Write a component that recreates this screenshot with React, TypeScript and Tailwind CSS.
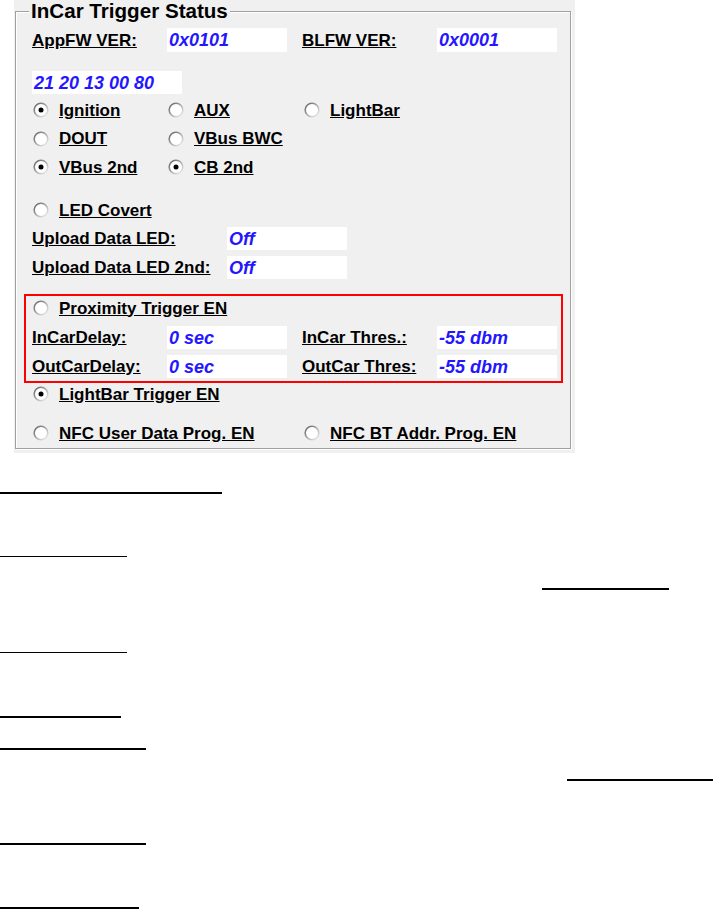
import React from "react";

const Radio = ({ checked }: { checked?: boolean }) => (
  <svg width="16" height="16" viewBox="0 0 16 16" className="shrink-0">
    <defs>
      <linearGradient id="radioRing" x1="0" y1="0" x2="1" y2="1">
        <stop offset="0" stopColor="#5e5e5e" />
        <stop offset="0.55" stopColor="#b0b0b0" />
        <stop offset="1" stopColor="#f6f6f6" />
      </linearGradient>
    </defs>
    <circle cx="8" cy="8" r="6.8" fill="#fff" stroke="url(#radioRing)" strokeWidth="1.6" />
    {checked && <circle cx="8" cy="8" r="2.5" fill="#000" />}
  </svg>
);

const Option = ({ label, checked, className }: { label: string; checked?: boolean; className?: string }) => (
  <div className={`flex items-center gap-[10px] ${className ?? ""}`}>
    <Radio checked={checked} />
    <span className="text-[17px] font-bold leading-none text-black underline">{label}</span>
  </div>
);

const Label = ({ text, className }: { text: string; className?: string }) => (
  <span className={`shrink-0 text-[17px] font-bold leading-none text-black underline ${className ?? ""}`}>{text}</span>
);

const Value = ({ text, className }: { text: string; className?: string }) => (
  <div className={`flex shrink-0 items-center bg-white pl-[2px] text-[18px] font-bold italic leading-none text-[#2416ff] ${className ?? ""}`}>
    {text}
  </div>
);

export default function App() {
  return (
    <div className="h-[910px] w-[713px] overflow-hidden bg-white font-['Liberation_Sans',Arial,sans-serif]">
      {/* dialog panel */}
      <div className="ml-[14px] h-[453px] w-[561px] bg-[#f0f0f0] pt-[11px]">
        {/* group box */}
        <div className="ml-[1px] w-[556px] border border-[#a0a0a0] pb-[1px] pl-[16px] shadow-[1px_1px_0_#fff,inset_1px_1px_0_#fff]">
          <div className="-mt-[12px] ml-[-3px] flex h-[22px] w-fit items-center bg-[#f0f0f0] px-[2px] text-[20.6px] font-bold leading-none text-black">
            InCar Trigger Status
          </div>

          <div className="mt-[6px] flex h-[24px] items-center">
            <Label text="AppFW VER:" className="w-[135px]" />
            <Value text="0x0101" className="h-[24px] w-[120px]" />
            <Label text="BLFW VER:" className="ml-[15px] w-[135px]" />
            <Value text="0x0001" className="h-[24px] w-[120px]" />
          </div>

          <Value text="21 20 13 00 80" className="mt-[19px] h-[23px] w-[150px]" />

          <div className="mt-[2px] flex h-[28px] items-center">
            <Option label="Ignition" checked className="ml-[1px] w-[135px]" />
            <Option label="AUX" className="w-[136px]" />
            <Option label="LightBar" />
          </div>
          <div className="flex h-[29px] items-center">
            <Option label="DOUT" className="ml-[1px] w-[135px]" />
            <Option label="VBus BWC" />
          </div>
          <div className="flex h-[28px] items-center">
            <Option label="VBus 2nd" checked className="ml-[1px] w-[135px]" />
            <Option label="CB 2nd" checked />
          </div>

          <div className="mt-[15px] flex h-[28px] items-center">
            <Option label="LED Covert" className="ml-[1px]" />
          </div>
          <div className="mt-[3px] flex h-[23px] items-center">
            <Label text="Upload Data LED:" className="w-[195px]" />
            <Value text="Off" className="h-[23px] w-[120px]" />
          </div>
          <div className="mt-[6px] flex h-[23px] items-center">
            <Label text="Upload Data LED 2nd:" className="w-[195px]" />
            <Value text="Off" className="h-[23px] w-[120px]" />
          </div>

          {/* highlighted proximity block */}
          <div className="ml-[-8px] mt-[15px] w-[539px] border-2 border-[#ff0000] pb-[3px] pl-[6px]">
            <div className="flex h-[24px] items-center">
              <Option label="Proximity Trigger EN" className="ml-[1px]" />
            </div>
            <div className="mt-[6px] flex h-[23px] items-center">
              <Label text="InCarDelay:" className="w-[135px]" />
              <Value text="0 sec" className="h-[23px] w-[120px]" />
              <Label text="InCar Thres.:" className="ml-[15px] w-[135px]" />
              <Value text="-55 dbm" className="h-[23px] w-[120px]" />
            </div>
            <div className="mt-[6px] flex h-[23px] items-center">
              <Label text="OutCarDelay:" className="w-[135px]" />
              <Value text="0 sec" className="h-[23px] w-[120px]" />
              <Label text="OutCar Thres:" className="ml-[15px] w-[135px]" />
              <Value text="-55 dbm" className="h-[23px] w-[120px]" />
            </div>
          </div>

          <div className="flex h-[22px] items-center">
            <Option label="LightBar Trigger EN" checked className="ml-[1px]" />
          </div>
          <div className="mt-[14px] flex h-[28px] items-center">
            <Option label="NFC User Data Prog. EN" className="ml-[1px] w-[271px]" />
            <Option label="NFC BT Addr. Prog. EN" />
          </div>
        </div>
      </div>

      {/* blank underlined fields */}
      <div className="mt-[39px] h-[2px] w-[222px] bg-black" />
      <div className="mt-[62px] h-px w-[127px] bg-black" />
      <div className="ml-[542px] mt-[31px] h-[2px] w-[127px] bg-black" />
      <div className="mt-[62px] h-px w-[127px] bg-black" />
      <div className="mt-[63px] h-[2px] w-[121px] bg-black" />
      <div className="mt-[30px] h-[2px] w-[146px] bg-black" />
      <div className="ml-[567px] mt-[29px] h-[2px] w-[146px] bg-black" />
      <div className="mt-[62px] h-[2px] w-[146px] bg-black" />
      <div className="mt-[62px] h-[2px] w-[139px] bg-black" />
    </div>
  );
}
